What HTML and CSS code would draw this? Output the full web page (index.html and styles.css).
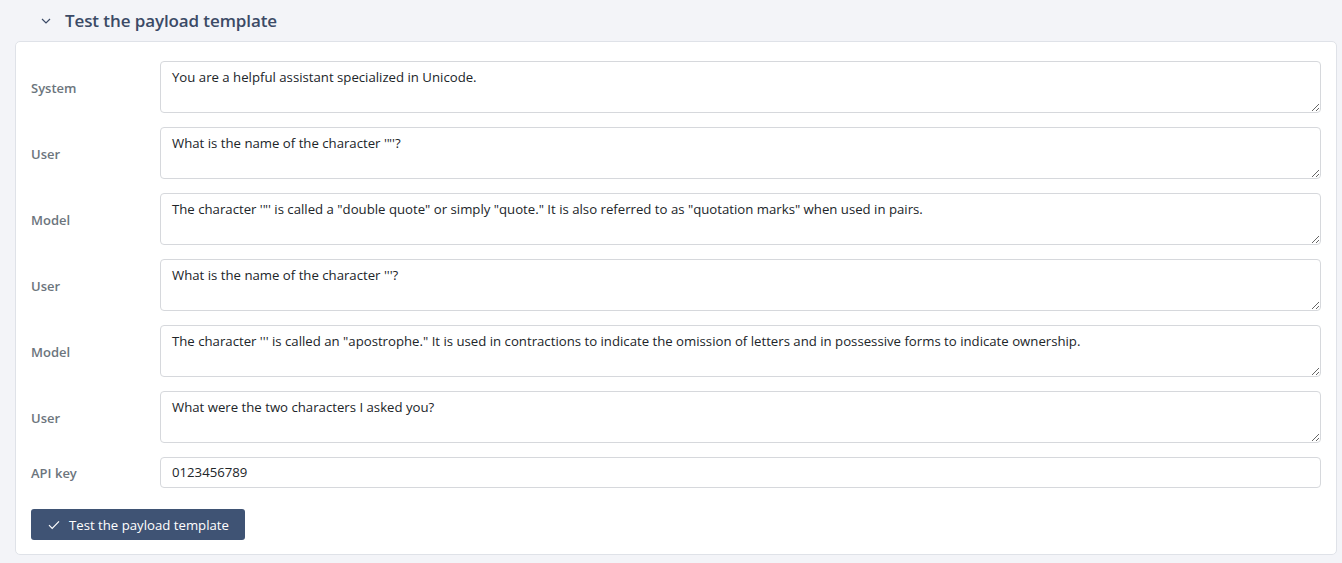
FILE: index.html
```html
<!DOCTYPE html>
<html>
<head>
<meta charset="utf-8">
<link rel="stylesheet" href="styles.css">
</head>
<body>
<div class="page">
  <div class="section-head">
    <svg class="chev" width="10" height="6" viewBox="0 0 10 6"><path d="M1 1 L5 5 L9 1" fill="none" stroke="#3b4a66" stroke-width="1.2"/></svg>
    <h2 class="title">Test the payload template</h2>
  </div>
  <div class="card">
    <div class="row"><label class="lbl">System</label><textarea class="ta">You are a helpful assistant specialized in Unicode.</textarea></div>
    <div class="row"><label class="lbl">User</label><textarea class="ta">What is the name of the character '"'?</textarea></div>
    <div class="row"><label class="lbl">Model</label><textarea class="ta">The character '"' is called a "double quote" or simply "quote." It is also referred to as "quotation marks" when used in pairs.</textarea></div>
    <div class="row"><label class="lbl">User</label><textarea class="ta">What is the name of the character '''?</textarea></div>
    <div class="row"><label class="lbl">Model</label><textarea class="ta">The character ''' is called an "apostrophe." It is used in contractions to indicate the omission of letters and in possessive forms to indicate ownership.</textarea></div>
    <div class="row"><label class="lbl">User</label><textarea class="ta">What were the two characters I asked you?</textarea></div>
    <div class="row row-input"><label class="lbl">API key</label><input class="inp" type="text" value="0123456789"></div>
    <button class="btn"><svg width="12" height="10" viewBox="0 0 12 10"><path d="M1 5.2 L4.2 8.4 L11 1.4" fill="none" stroke="#fff" stroke-width="1.2"/></svg><span>Test the payload template</span></button>
  </div>
</div>
</body>
</html>
```
FILE: styles.css
```css
* { box-sizing: border-box; }
html, body { margin: 0; padding: 0; }
body {
  background: #f3f4f8;
  font-family: "Open Sans", "Noto Sans", sans-serif;
  color: #212529;
}
.page { padding: 0 5px 0 15px; }
.section-head {
  display: flex;
  align-items: center;
  height: 41px;
  padding-left: 26px;
  padding-bottom: 1px;
}
.chev { margin-right: 14px; margin-top: 2px; }
.title {
  margin: 0;
  font-size: 17px;
  font-weight: 600;
  color: #3b4a66;
  letter-spacing: -0.1px;
}
.card {
  background: #fff;
  border: 1px solid #dfe2e8;
  border-radius: 5px;
  padding: 19px 15px 14px 15px;
  display: flex;
  flex-direction: column;
  gap: 14px;
}
.row {
  display: flex;
  align-items: center;
}
.lbl {
  width: 129px;
  flex: none;
  font-size: 13px;
  font-weight: 600;
  color: #6c757d;
  padding-top: 1px;
}
.ta, .inp {
  flex: 1;
  font-family: inherit;
  font-size: 13.2px;
  color: #212529;
  border: 1px solid #d6d8dc;
  border-radius: 4px;
  background: #fff;
  padding: 6px 11px;
  outline: none;
}
.ta { height: 52px; resize: vertical; line-height: 18px; }
.inp { height: 31px; padding: 5px 11px 6px; }
.btn {
  align-self: flex-start;
  margin-top: 7px;
  display: flex;
  align-items: center;
  gap: 9px;
  height: 31px;
  width: 214px;
  padding: 0 0 0 17px;
  background: #3f5374;
  color: #fff;
  border: none;
  border-radius: 3px;
  font-family: inherit;
  font-size: 13.2px;
}
```
